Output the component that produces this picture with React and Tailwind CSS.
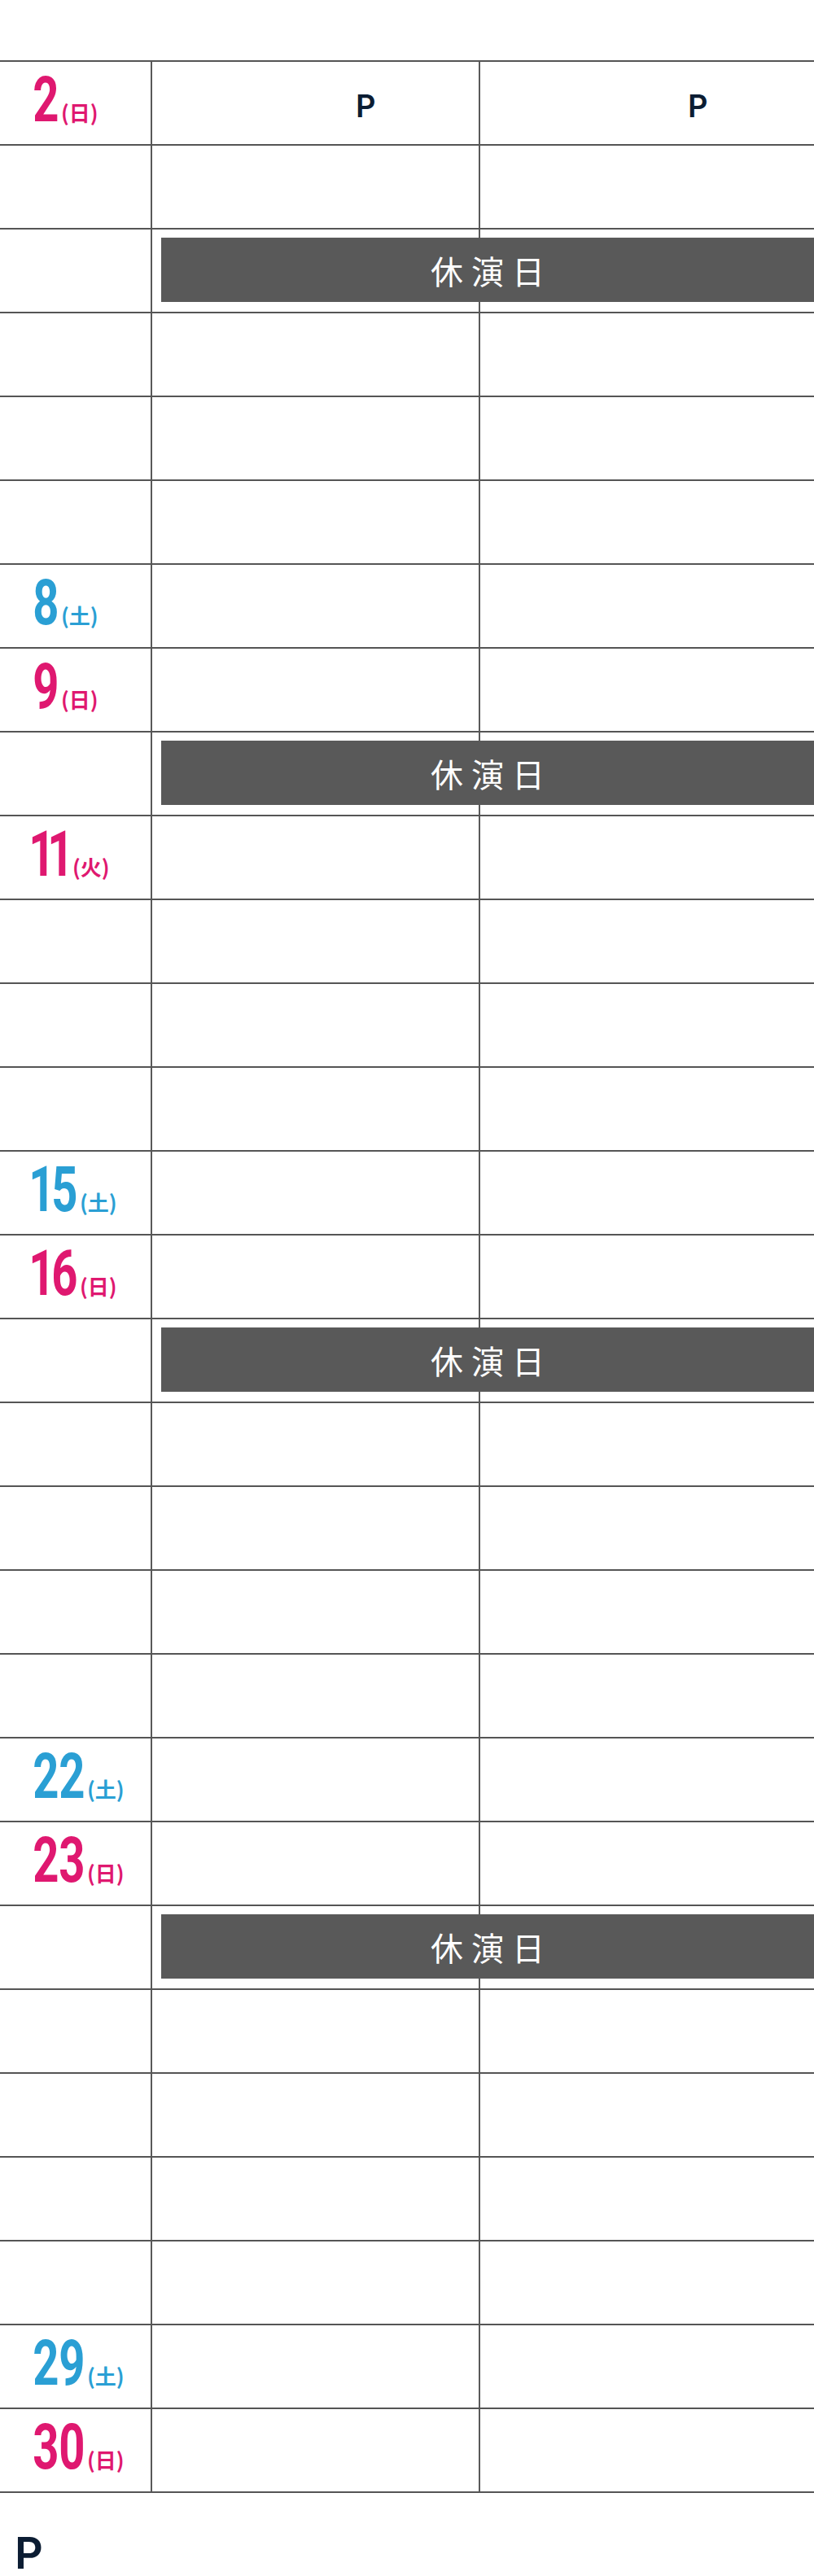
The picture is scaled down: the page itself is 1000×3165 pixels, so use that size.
const PINK = 'text-[#df1870]'
const BLUE = 'text-[#2a9fd4]'

const rows = [
  { day: '2', wd: '日', color: PINK, header: true },
  {},
  { off: true },
  {},
  {},
  {},
  { day: '8', wd: '土', color: BLUE },
  { day: '9', wd: '日', color: PINK },
  { off: true },
  { day: '11', wd: '火', color: PINK },
  {},
  {},
  {},
  { day: '15', wd: '土', color: BLUE },
  { day: '16', wd: '日', color: PINK },
  { off: true },
  {},
  {},
  {},
  {},
  { day: '22', wd: '土', color: BLUE },
  { day: '23', wd: '日', color: PINK },
  { off: true },
  {},
  {},
  {},
  {},
  { day: '29', wd: '土', color: BLUE },
  { day: '30', wd: '日', color: PINK },
]

// condensed digits: every figure sits in its own box, the glyph squeezed inside
function Digit({ ch }) {
  return (
    <span className={`flex justify-center ${ch === '1' ? 'w-[23px]' : 'w-[32px]'}`}>
      <span className="shrink-0 scale-x-[0.72] font-['Roboto',sans-serif] font-bold text-[78px] leading-none">
        {ch}
      </span>
    </span>
  )
}

function DateCell({ row }) {
  if (!row.day) return <div className="border-r-2 border-[#595959]" />
  return (
    <div className={`pl-[40px] pt-[8px] border-r-2 border-[#595959] ${row.color}`}>
      <div className="flex items-end">
        {row.day.split('').map((ch, i) => (
          <Digit key={i} ch={ch} />
        ))}
        <span className="ml-[3px] mb-[11px] font-['Noto_Sans_CJK_JP',sans-serif] font-bold text-[26px] leading-none whitespace-nowrap">
          ({row.wd})
        </span>
      </div>
    </div>
  )
}

function Row({ row }) {
  return (
    <div className="relative grid grid-cols-[187px_403px_1fr] h-[103px] border-b-2 border-[#555]">
      <DateCell row={row} />
      <div className="border-r-2 border-[#595959] pl-[250px] pt-[35px]">
        {row.header && (
          <span className="font-['Inter',sans-serif] font-semibold text-[38px] leading-none text-[#0c1d33]">P</span>
        )}
      </div>
      <div className="pl-[255px] pt-[35px]">
        {row.header && (
          <span className="font-['Inter',sans-serif] font-semibold text-[38px] leading-none text-[#0c1d33]">P</span>
        )}
      </div>
      {row.off && (
        <div className="absolute left-[198px] right-0 top-[10px] h-[79px] bg-[#595959] flex items-center justify-center">
          <span className="pl-[10px] font-['Noto_Sans_CJK_JP',sans-serif] text-[40px] leading-none tracking-[10px] text-white">
            休演日
          </span>
        </div>
      )}
    </div>
  )
}

export default function App() {
  return (
    <div className="w-[1000px] bg-white">
      <div className="mt-[74px] border-t-2 border-[#555]">
        {rows.map((row, i) => (
          <Row key={i} row={row} />
        ))}
      </div>
      <div className="pl-[18px] pt-[47px] font-['Inter',sans-serif] font-semibold text-[54px] leading-none text-[#0c1d33]">
        P
      </div>
    </div>
  )
}
